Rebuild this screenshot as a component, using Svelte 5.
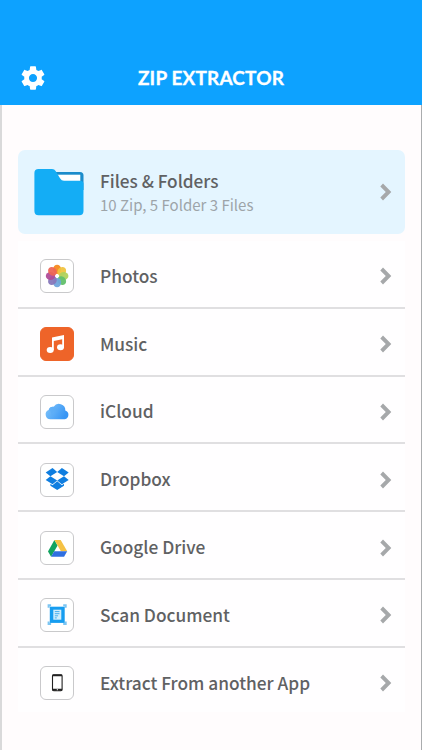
<script lang="ts">
    type Row = { icon: string; label: string };

    const rows: Row[] = [
        { icon: "photos", label: "Photos" },
        { icon: "music", label: "Music" },
        { icon: "icloud", label: "iCloud" },
        { icon: "dropbox", label: "Dropbox" },
        { icon: "drive", label: "Google Drive" },
        { icon: "scan", label: "Scan Document" },
        { icon: "phone", label: "Extract From another App" },
    ];

    // clockwise, starting from the top petal
    const petals = [
        "#f58a1f",
        "#f0c440",
        "#b0d25c",
        "#62c06c",
        "#70a6dc",
        "#8778ba",
        "#b04c98",
        "#ed6656",
    ];
</script>

{#snippet chevron()}
    <svg class="chevron" viewBox="0 0 12 18" width="12" height="18">
        <path d="M3 .6 11.3 9 3 17.4.3 14.6 5.8 9 .3 3.4z" fill="#a6a8aa" />
    </svg>
{/snippet}

<div class="app">
    <header class="header">
        <svg class="gear" viewBox="0 0 24 24" width="28" height="28">
            <path
                fill="#fff"
                d="M19.43 12.98c.04-.32.07-.64.07-.98s-.03-.66-.07-.98l2.11-1.65c.19-.15.24-.42.12-.64l-2-3.46c-.12-.22-.39-.3-.61-.22l-2.49 1c-.52-.4-1.08-.73-1.69-.98l-.38-2.65C14.46 2.18 14.25 2 14 2h-4c-.25 0-.46.18-.49.42l-.38 2.65c-.61.25-1.17.59-1.69.98l-2.49-1c-.23-.09-.49 0-.61.22l-2 3.46c-.13.22-.07.49.12.64l2.11 1.65c-.04.32-.07.65-.07.98s.03.66.07.98l-2.11 1.65c-.19.15-.24.42-.12.64l2 3.46c.12.22.39.3.61.22l2.49-1c.52.4 1.08.73 1.69.98l.38 2.65c.03.24.24.42.49.42h4c.25 0 .46-.18.49-.42l.38-2.65c.61-.25 1.17-.59 1.69-.98l2.49 1c.23.09.49 0 .61-.22l2-3.46c.12-.22.07-.49-.12-.64l-2.11-1.65zM12 15.5c-1.93 0-3.5-1.57-3.5-3.5s1.57-3.5 3.5-3.5 3.5 1.57 3.5 3.5-1.57 3.5-3.5 3.5z"
            />
        </svg>
        <h1 class="title">ZIP EXTRACTOR</h1>
    </header>

    <main class="content">
        <div class="card">
            <svg class="folder" viewBox="0 0 50 48" width="50" height="48">
                <path d="M20 4h26q3.500 0 3.500 3.500V22H20z" fill="#1b8ccb" />
                <path d="M22 6.700h24.300V16H22z" fill="#fff" />
                <path
                    d="M4.500 1H18q2.500 0 3.800 2.200l4.200 7q1.500 2.500 4 2.500h15.800q3.700 0 3.700 3V43q0 4.200-4.200 4.200H4.500Q.4 47.200.4 43V5Q.4 1 4.500 1z"
                    fill="#14adf5"
                />
            </svg>
            <div class="card-text">
                <div class="card-title">Files &amp; Folders</div>
                <div class="card-info">10 Zip, 5 Folder 3 Files</div>
            </div>
            {@render chevron()}
        </div>

        <div class="list">
            {#each rows as row}
                <div class="row">
                    <div class="tile" class:filled={row.icon === "music"}>
                        <svg viewBox="0 0 34 34" width="34" height="34">
                            {#if row.icon === "photos"}
                                {#each petals as color, i}
                                    <ellipse
                                        cx="17.100"
                                        cy="10.400"
                                        rx="4"
                                        ry="4.700"
                                        fill={color}
                                        fill-opacity="0.950"
                                        transform="rotate({i * 45} 17.1 17)"
                                    />
                                {/each}
                                <circle cx="17.100" cy="17" r="1" fill="#fff" />
                            {:else if row.icon === "music"}
                                <path
                                    d="M12 10.600 24 8v12.500h-1.800v-8.300l-8.400 1.800v9.300H12z"
                                    fill="#fff"
                                />
                                <ellipse cx="10.200" cy="23" rx="3.500" ry="3" fill="#fff" />
                                <ellipse cx="20.500" cy="20.300" rx="3.500" ry="3" fill="#fff" />
                            {:else if row.icon === "icloud"}
                                <defs>
                                    <linearGradient id="cloud" x1="0" y1="0" x2="1" y2="0.400">
                                        <stop offset="0" stop-color="#82c6fb" />
                                        <stop offset="1" stop-color="#3996f4" />
                                    </linearGradient>
                                </defs>
                                <path
                                    d="M10.300 24.200a4.700 4.700 0 0 1-1.600-9.100 4 4 0 0 1 5-3.300 6.300 6.300 0 0 1 11.600 3.700 4.500 4.500 0 0 1-.500 8.700z"
                                    fill="url(#cloud)"
                                />
                                <path
                                    d="M8.700 15.100a4 4 0 0 1 5-3.300q3 .8 3.700 3.800-4.500-.3-5.700 4.600-.5-4-3-5.100z"
                                    fill="#5aacf7"
                                    fill-opacity="0.600"
                                />
                            {:else if row.icon === "dropbox"}
                                <g fill="#0f7ee0">
                                    <path d="m12.500 5.100 4.700 3.900-6.800 4.200L5.700 9.400z" />
                                    <path d="m21.900 5.100-4.700 3.900 6.800 4.200 4.700-3.800z" />
                                    <path d="m5.700 17 4.700-3.800 6.800 4.200-4.700 3.900z" />
                                    <path d="M28.700 17 24 13.200l-6.800 4.200 4.700 3.900z" />
                                    <path d="m17.200 18.300 4.700 3.900 2.100-1.400v2L17.200 27l-6.800-4.200v-2l2.100 1.400z" />
                                </g>
                            {:else if row.icon === "drive"}
                                <path d="M14.400 9 8 20.500l3.100 5.300 6.500-11.300z" fill="#11a360" />
                                <path d="M14.400 9h6.300l6.500 11.300h-6.300z" fill="#f5c244" />
                                <path d="M14.200 20.300h13l-3.100 5.500h-13z" fill="#2f6fe0" />
                            {:else if row.icon === "scan"}
                                <path
                                    d="M8.600 9.800V7.300h2.500M23.200 7.300h2.500v2.500M25.700 23.500V26h-2.500M11.100 26H8.600v-2.500"
                                    fill="none"
                                    stroke="#7cc5f2"
                                    stroke-width="2"
                                />
                                <path d="M9.800 8.700h14.900v16.200H9.800z" fill="#169df0" />
                                <path d="M13.300 11.700h8v10h-8z" fill="#d2eefc" />
                                <path
                                    d="M14.800 13.600h4.700M14.800 15.700h4.700M14.800 17.800h3.300M14.800 19.900h2"
                                    stroke="#45aeef"
                                    stroke-width="1"
                                />
                            {:else}
                                <rect
                                    x="12.500"
                                    y="8.700"
                                    width="9.600"
                                    height="16"
                                    rx="1.200"
                                    fill="#fff"
                                    stroke="#222"
                                    stroke-width="1.100"
                                />
                                <path d="M12.500 9.400h9.600M12.500 23.700h9.600" stroke="#222" stroke-width="1.900" />
                                <circle cx="17.300" cy="23.700" r="0.600" fill="#fff" />
                            {/if}
                        </svg>
                    </div>
                    <span class="label">{row.label}</span>
                    {@render chevron()}
                </div>
            {/each}
        </div>
    </main>
</div>

<style>
    :global(body) {
        background: #fffcfd;
    }

    .app {
        box-sizing: border-box;
        height: 750px;
        overflow: hidden;
        font-family: "Noto Sans CJK SC", "Open Sans", sans-serif;
        color: #606163;
    }

    /* --- Header --- */
    .header {
        box-sizing: border-box;
        height: 105px;
        padding: 50px 19px 0;
        display: grid;
        grid-template-columns: 28px 1fr 28px;
        align-items: center;
        background: #0da2ff;
    }

    .title {
        margin: 0;
        font-family: Lato, "Liberation Sans", sans-serif;
        font-size: 19px;
        font-weight: 700;
        line-height: 24px;
        letter-spacing: 0.15px;
        text-align: center;
        color: #fff;
        -webkit-text-stroke: 0.3px #fff;
    }

    /* --- Content --- */
    .content {
        box-sizing: border-box;
        height: 645px;
        padding: 45px 16px 0;
        border-left: 2px solid #d9d9da;
        border-right: 1px solid #aaacae;
    }

    .card {
        box-sizing: border-box;
        display: flex;
        align-items: center;
        height: 84px;
        padding: 0 13px 0 16px;
        border-radius: 7px;
        background: #e4f5ff;
    }

    .card-text {
        flex: 1;
        margin-left: 16px;
        padding-top: 2px;
    }

    .card-title {
        font-size: 17.2px;
        font-weight: 500;
        line-height: 24px;
    }

    .card-info {
        font-size: 15px;
        line-height: 24px;
        color: #9da4a9;
    }

    /* --- Rows --- */
    .list {
        margin-top: 7px;
        background: #fffeff;
    }

    .row {
        box-sizing: border-box;
        display: flex;
        align-items: center;
        height: 67.8px;
        padding: 5px 13px 0 22px;
        border-bottom: 2px solid #e0dfe1;
    }

    .row:last-child {
        height: 64px;
        padding-top: 7px;
        border-bottom: none;
    }

    .tile {
        box-sizing: border-box;
        width: 34px;
        height: 34px;
        border: 1px solid #c9c9cb;
        border-radius: 6px;
        background: #fff;
    }

    .tile svg {
        display: block;
        margin: -1px;
    }

    .tile.filled {
        border-color: #ee6429;
        background: #ee6429;
    }

    .label {
        flex: 1;
        margin-left: 26px;
        padding-bottom: 1px;
        font-size: 17.3px;
        font-weight: 500;
        line-height: 24px;
    }

    .chevron {
        flex-shrink: 0;
    }
</style>
